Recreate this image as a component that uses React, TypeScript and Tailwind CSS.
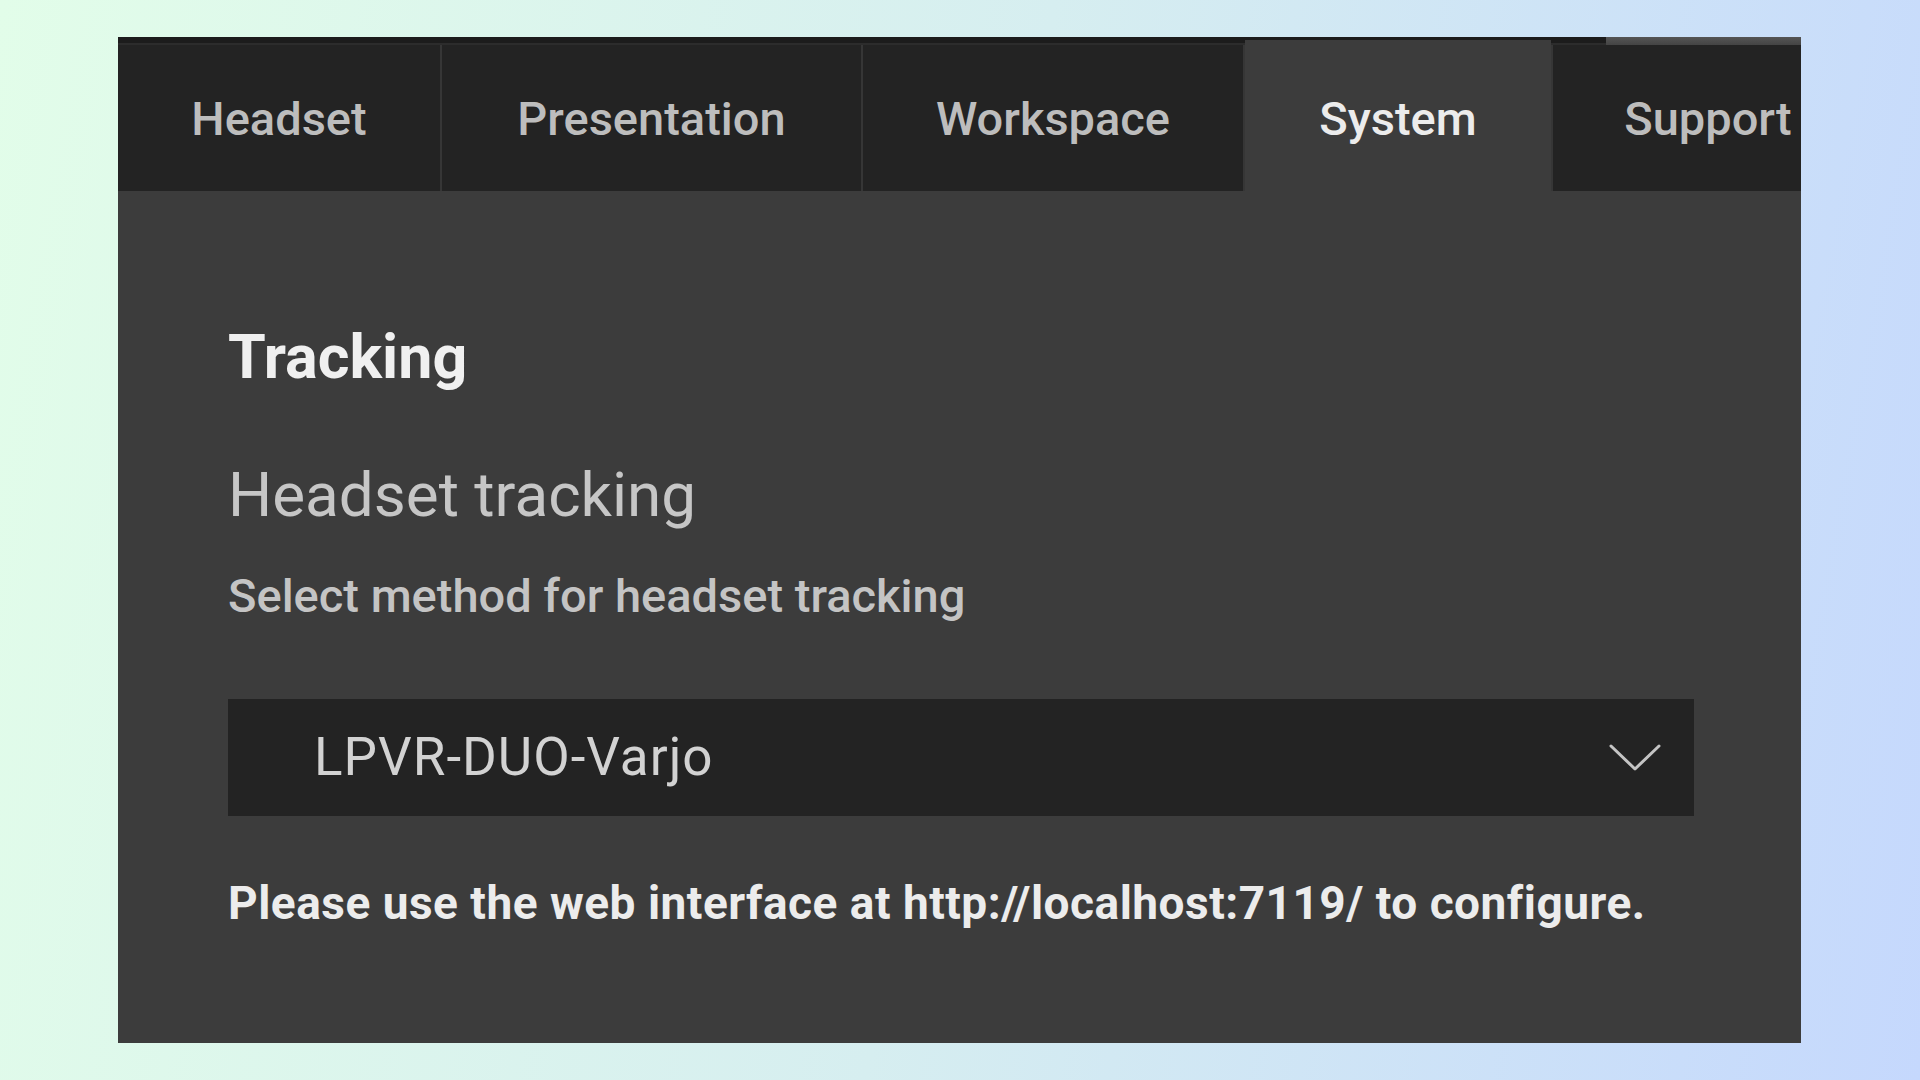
import React from "react";

const tabs = [
  { label: "Headset", w: "w-[322px]", active: false },
  { label: "Presentation", w: "w-[419px]", active: false },
  { label: "Workspace", w: "w-[380px]", active: false },
  { label: "System", w: "w-[306px]", active: true },
  { label: "Support", w: "w-[310px]", active: false },
];

export default function App() {
  return (
    <div className="w-[1920px] h-[1080px] overflow-hidden bg-[linear-gradient(100deg,#e2fde9_0%,#d6eef0_50%,#c5d8fd_100%)] pt-[37px] pl-[118px] font-[family-name:Roboto,sans-serif]">
      <div className="w-[1683px] h-[1006px] bg-[#3c3c3c] flex flex-col overflow-hidden">
        {/* top scroll strip */}
        <div className="h-[8px] flex shrink-0">
          <div className="w-[1488px] h-full bg-[#2c2c2c] flex flex-col">
            <div className="h-[6px] bg-[#1c1c1c]" />
          </div>
          <div className="flex-1 h-full bg-[linear-gradient(180deg,#555555,#444444)]" />
        </div>
        {/* tabs */}
        <div className="h-[146px] flex gap-[2px] bg-[#363636] shrink-0">
          {tabs.map((t) => (
            <div
              key={t.label}
              className={
                t.active
                  ? `${t.w} shrink-0 -mt-[5px] h-[151px] bg-[#3c3c3c] flex items-center justify-center pt-[5px] text-[47px] font-medium leading-none text-[#ececec]`
                  : `${t.w} shrink-0 h-full bg-[#232323] flex items-center justify-center text-[47px] font-medium leading-none text-[#bdbdbd]`
              }
            >
              {t.label}
            </div>
          ))}
        </div>
        {/* content */}
        <div className="flex flex-col pt-[136px] pl-[110px] pr-[107px]">
          <div className="text-[61px] font-bold leading-none text-[#f0f0f0]">Tracking</div>
          <div className="mt-[76px] text-[62px] leading-none text-[#c6c6c6]">Headset tracking</div>
          <div className="mt-[46px] text-[47px] font-medium leading-none text-[#c4c4c4]">
            Select method for headset tracking
          </div>
          <div className="mt-[80px] h-[117px] bg-[#232323] flex items-center justify-between pl-[86px] pr-[33px]">
            <span className="text-[53px] leading-none tracking-[1px] text-[#d2d2d2]">LPVR-DUO-Varjo</span>
            <svg width="52" height="28" viewBox="0 0 52 28" fill="none">
              <polyline
                points="2,2 26,25 50,2"
                stroke="#c4c4c4"
                strokeWidth="3"
                strokeLinecap="round"
                strokeLinejoin="round"
              />
            </svg>
          </div>
          <div className="mt-[64px] text-[46px] font-bold leading-none tracking-[0.5px] text-[#ececec]">
            Please use the web interface at http://localhost:7119/ to configure.
          </div>
        </div>
      </div>
    </div>
  );
}
